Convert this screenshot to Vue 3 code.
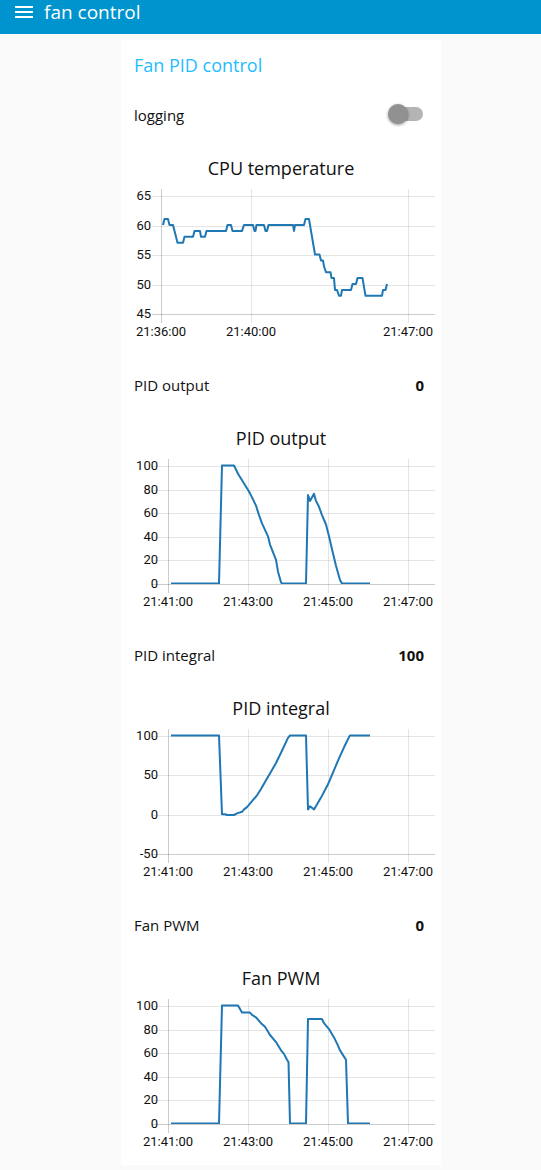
<script setup>
import { ref } from 'vue'

const logging = ref(false)

const PLOT_TOP = 15
const PLOT_HEIGHT = 118

const minuteTicks = [
  { x: 48, label: '21:41:00' },
  { x: 128, label: '21:43:00' },
  { x: 208, label: '21:45:00' },
  { x: 288, label: '21:47:00' },
]

const charts = [
  {
    id: 'cpu', title: 'CPU temperature', min: 45, max: 65, yTicks: [65, 60, 55, 50, 45], labelEnd: 30,
    xTicks: [{ x: 41, label: '21:36:00' }, { x: 131, label: '21:40:00' }, { x: 288, label: '21:47:00' }],
    data: [[42, 60], [43.5, 61], [47, 61], [48.5, 60], [52, 60], [53.5, 59], [55, 58], [56.5, 57], [62, 57], [63.5, 58], [72, 58], [73.5, 59], [79, 59], [80, 58], [84, 58], [85.5, 59], [105, 59], [106.5, 60], [110, 60], [111.5, 59], [121, 59], [123, 60], [132, 60], [133.5, 59], [134.5, 59], [135.5, 60], [143, 60], [144.5, 59], [146, 59], [147.5, 60], [172, 60], [173, 59], [174, 60], [183, 60], [184.5, 61], [188, 61], [194, 55], [198.5, 55], [200, 54], [202, 54], [203, 53], [205, 52], [209.5, 52], [210.5, 51], [213, 51], [214, 49], [216, 49], [218, 48], [220, 48], [221, 49], [230, 49], [231.5, 50], [235, 50], [236.5, 51], [241.5, 51], [244.5, 48], [261, 48], [262, 49], [264.5, 49], [266, 50]],
  },
  {
    id: 'output', title: 'PID output', value: 0, min: 0, max: 100, yTicks: [100, 80, 60, 40, 20, 0], labelEnd: 37, xTicks: minuteTicks,
    data: [[50, 0], [98, 0], [101, 100], [113, 100], [117, 93], [128, 78], [131, 73], [135, 66], [138, 58], [141, 51], [147, 40], [149, 33], [155, 20], [157, 10], [160, 1], [161, 0], [185, 0], [187, 75], [189, 70], [193, 76], [195, 70], [198, 65], [201, 58], [205, 50], [208, 40], [211, 29], [215, 15], [219, 3], [221, 0], [249, 0]],
  },
  {
    id: 'integral', title: 'PID integral', value: 100, min: -50, max: 100, yTicks: [100, 50, 0, -50], labelEnd: 37, xTicks: minuteTicks,
    data: [[50, 100], [98, 100], [101, 0], [104, 0], [106, -1], [113, -1], [116, 1], [121, 3], [123, 6], [126, 9], [130, 15], [136, 24], [140, 32], [145, 43], [150, 54], [155, 65], [160, 78], [167, 97], [169, 100], [185, 100], [187, 6], [189, 10], [193, 6], [200, 21], [207, 38], [213, 56], [218, 71], [223, 85], [228, 98], [229, 100], [249, 100]],
  },
  {
    id: 'pwm', title: 'Fan PWM', value: 0, min: 0, max: 100, yTicks: [100, 80, 60, 40, 20, 0], labelEnd: 37, xTicks: minuteTicks,
    data: [[50, 0], [98, 0], [101, 100], [117, 100], [121, 94], [129, 94], [131, 92], [135, 90], [140, 85], [144, 82], [149, 75], [155, 69], [160, 62], [163, 59], [166, 54], [167.5, 52], [169, 0], [185, 0], [187, 88.5], [201, 88.5], [203, 85], [208, 80], [213, 73], [217, 66], [219, 62], [222, 58], [225, 54], [227, 0], [249, 0]],
  },
]

const scaleY = (chart, v) => PLOT_TOP + ((chart.max - v) / (chart.max - chart.min)) * PLOT_HEIGHT
const gridY = (chart, v) => Math.round(scaleY(chart, v)) + 0.5
const points = (chart) => chart.data.map(([x, v]) => `${x},${(scaleY(chart, v) - 0.5).toFixed(1)}`).join(' ')
</script>

<template>
  <div class="page">
    <header class="toolbar">
      <button class="menu" type="button" aria-label="Menu">
        <svg width="18" height="12" viewBox="0 0 18 12" aria-hidden="true">
          <path d="M0 0h18v2H0zM0 5h18v2H0zM0 10h18v2H0z" fill="currentColor" />
        </svg>
      </button>
      <h1>fan control</h1>
    </header>

    <div class="content">
      <main class="card">
        <h2>Fan PID control</h2>
        <div class="row">
          <label for="logging">logging</label>
          <input id="logging" v-model="logging" class="switch" type="checkbox" role="switch" />
        </div>

        <template v-for="chart in charts" :key="chart.id">
          <div v-if="chart.value !== undefined" class="row">
            <span>{{ chart.title }}</span>
            <strong>{{ chart.value }}</strong>
          </div>
          <section class="chart">
            <h3>{{ chart.title }}</h3>
            <svg class="plot" viewBox="0 0 320 174" role="img" :aria-label="chart.title">
              <defs>
                <clipPath :id="'area-' + chart.id"><rect x="40" y="8" width="274" height="125" /></clipPath>
              </defs>
              <g class="grid">
                <line v-for="v in chart.yTicks" :key="v" x1="31" x2="314" :y1="gridY(chart, v)" :y2="gridY(chart, v)" :class="{ axis: v === chart.min }" />
                <line v-for="(t, i) in chart.xTicks" :key="t.label" y1="8" y2="142" :x1="t.x - 0.5" :x2="t.x - 0.5" :class="{ axis: i === 0 }" />
              </g>
              <polyline class="series" :points="points(chart)" :clip-path="`url(#area-${chart.id})`" />
              <g class="ticks">
                <text v-for="v in chart.yTicks" :key="v" :x="chart.labelEnd" :y="Math.round(scaleY(chart, v)) + 4" text-anchor="end">{{ v }}</text>
                <text v-for="t in chart.xTicks" :key="t.label" :x="t.x - 1" y="155" text-anchor="middle">{{ t.label }}</text>
              </g>
            </svg>
          </section>
        </template>
      </main>
    </div>
  </div>
</template>

<style>
body {
  margin: 0;
  background: #fafafa;
}
</style>

<style scoped>
.page {
  font-family: "Segoe UI", "Open Sans", "Noto Sans", sans-serif;
  color: #111;
}
.toolbar {
  display: flex;
  align-items: flex-start;
  gap: 11px;
  height: 34px;
  padding: 0 15px;
  background: #0094ce;
  color: #fff;
}
.menu {
  display: flex;
  align-items: center;
  height: 24px;
  padding: 0;
  border: 0;
  background: none;
  color: inherit;
}
h1 {
  margin: 0;
  font-size: 19px;
  font-weight: 400;
  line-height: 24px;
}
.content {
  padding: 6px 0 5px 21px;
}
.card {
  max-width: 320px;
  margin: 0 auto;
  background: #fff;
}
h2 {
  margin: 0;
  padding: 0 13px;
  font-size: 18px;
  font-weight: 400;
  line-height: 50px;
  color: #1fbcff;
}
.row {
  display: flex;
  align-items: center;
  justify-content: space-between;
  height: 50px;
  padding: 0 17px 0 13px;
  font-size: 15px;
}
.row strong {
  font-weight: 700;
}
.switch {
  appearance: none;
  display: flex;
  align-items: center;
  width: 34px;
  height: 14px;
  margin: 0 1px 2px 0;
  border-radius: 7px;
  background: #b4b4b4;
}
.switch::before {
  content: "";
  width: 20px;
  height: 20px;
  flex: none;
  margin-left: -1px;
  border-radius: 50%;
  background: #919191;
  box-shadow: 0 1px 3px rgba(0, 0, 0, 0.45);
}
.switch:checked {
  justify-content: flex-end;
}
.chart {
  padding: 15px 0 5px;
}
.chart:last-child {
  padding-bottom: 0;
}
h3 {
  margin: 0;
  font-size: 18px;
  font-weight: 400;
  line-height: 26px;
  text-align: center;
}
.plot {
  display: block;
  width: 100%;
}
.grid line {
  stroke: rgba(0, 0, 0, 0.1);
}
.grid .axis {
  stroke: rgba(0, 0, 0, 0.2);
}
.series {
  fill: none;
  stroke: #1f77b4;
  stroke-width: 2;
  stroke-linejoin: round;
}
.ticks text {
  font-family: Roboto, "Liberation Sans", sans-serif;
  font-size: 13px;
  fill: #111;
}
</style>
